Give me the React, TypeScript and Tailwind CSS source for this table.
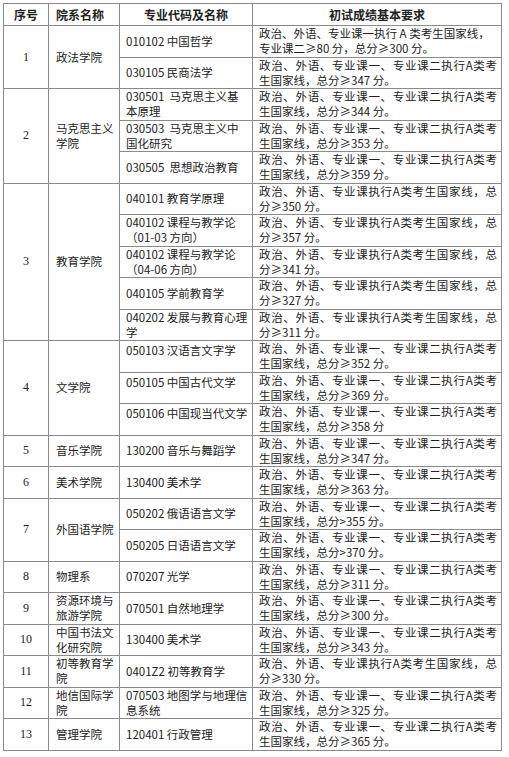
import React from 'react'

type Major = { name: string[]; req: string[]; loose?: boolean }
type Group = { no: string; dept: string[]; majors: Major[]; top?: boolean }

const B = '政治、外语、专业课一、专业课二执行A类考'
const C = '政治、外语、专业课执行A类考生国家线，总'

const groups: Group[] = [
  {
    no: '1',
    dept: ['政法学院'],
    majors: [
      { name: ['010102 中国哲学'], req: ['政治、外语、专业课一执行 A 类考生国家线，', '专业课二≥80 分，总分≥300 分。'], loose: true },
      { name: ['030105 民商法学'], req: [B, '生国家线，总分≥347 分。'] },
    ],
  },
  {
    no: '2',
    dept: ['马克思主义', '学院'],
    majors: [
      { name: ['030501  马克思主义基', '本原理'], req: [B, '生国家线，总分≥344 分。'] },
      { name: ['030503  马克思主义中', '国化研究'], req: [B, '生国家线，总分≥353 分。'] },
      { name: ['030505  思想政治教育'], req: [B, '生国家线，总分≥359 分。'] },
    ],
  },
  {
    no: '3',
    dept: ['教育学院'],
    majors: [
      { name: ['040101 教育学原理'], req: [C, '分≥350 分。'] },
      { name: ['040102 课程与教学论', '（01-03 方向）'], req: [C, '分≥357 分。'] },
      { name: ['040102 课程与教学论', '（04-06 方向）'], req: [C, '分≥341 分。'] },
      { name: ['040105 学前教育学'], req: [C, '分≥327 分。'] },
      { name: ['040202 发展与教育心理', '学'], req: [C, '分≥311 分。'] },
    ],
  },
  {
    no: '4',
    dept: ['文学院'],
    top: true,
    majors: [
      { name: ['050103 汉语言文字学'], req: [B, '生国家线，总分≥352 分。'] },
      { name: ['050105 中国古代文学'], req: [B, '生国家线，总分≥369 分。'] },
      { name: ['050106 中国现当代文学'], req: [B, '生国家线，总分≥358 分'] },
    ],
  },
  { no: '5', dept: ['音乐学院'], majors: [{ name: ['130200 音乐与舞蹈学'], req: [B, '生国家线，总分≥347 分。'] }] },
  { no: '6', dept: ['美术学院'], majors: [{ name: ['130400 美术学'], req: [B, '生国家线，总分≥363 分。'] }] },
  {
    no: '7',
    dept: ['外国语学院'],
    majors: [
      { name: ['050202 俄语语言文学'], req: [B, '生国家线，总分>355 分。'] },
      { name: ['050205 日语语言文学'], req: [B, '生国家线，总分>370 分。'] },
    ],
  },
  { no: '8', dept: ['物理系'], majors: [{ name: ['070207 光学'], req: [B, '生国家线，总分≥311 分。'] }] },
  { no: '9', dept: ['资源环境与', '旅游学院'], majors: [{ name: ['070501 自然地理学'], req: [B, '生国家线，总分≥300 分。'] }] },
  { no: '10', dept: ['中国书法文', '化研究院'], majors: [{ name: ['130400 美术学'], req: [B, '生国家线，总分≥343 分。'] }] },
  { no: '11', dept: ['初等教育学', '院'], majors: [{ name: ['0401Z2 初等教育学'], req: [C, '分≥330 分。'] }] },
  { no: '12', dept: ['地信国际学', '院'], majors: [{ name: ['070503 地图学与地理信', '息系统'], req: [B, '生国家线，总分≥325 分。'] }] },
  { no: '13', dept: ['管理学院'], majors: [{ name: ['120401 行政管理'], req: [B, '生国家线，总分≥365 分。'] }] },
]

const cell = 'border border-[#8a8a8a] p-0'

export default function App() {
  return (
    <div className="bg-white min-h-[757px] pl-[3px] pt-[3px] text-[#222] font-['Noto_Sans_CJK_SC',sans-serif] text-[11.5px] leading-[15px]">
      <table className="table-fixed border-collapse w-[498px] border border-[#6e6e6e]">
        <colgroup>
          <col className="w-[45px]" />
          <col className="w-[71px]" />
          <col className="w-[133px]" />
          <col className="w-[249px]" />
        </colgroup>
        <thead>
          <tr className="h-[22px] font-bold text-[12px]">
            <th className={`${cell} text-center`}>序号</th>
            <th className={`${cell} text-left pl-[7px]`}>院系名称</th>
            <th className={`${cell} text-center`}>专业代码及名称</th>
            <th className={`${cell} text-center font-semibold`}>初试成绩基本要求</th>
          </tr>
        </thead>
        <tbody>
          {groups.map(g =>
            g.majors.map((m, i) => (
              <tr key={g.no + '-' + i} className="h-[31.5px]">
                {i === 0 && (
                  <>
                    <td rowSpan={g.majors.length} className={`${cell} text-center font-['Liberation_Serif',serif] text-[12px]`}>
                      {g.no}
                    </td>
                    <td rowSpan={g.majors.length} className={`${cell} pl-[7px] pr-[2px]`}>
                      {g.dept.map((d, k) => <div key={k} className="whitespace-nowrap">{d}</div>)}
                    </td>
                  </>
                )}
                <td className={`${cell} pl-[6px] ${g.top ? 'align-top pt-[2px]' : ''}`}>
                  {m.name.map((n, k) => <div key={k} className="whitespace-pre">{n}</div>)}
                </td>
                <td className={`${cell} pl-[6px] pr-[4px]`}>
                  <div className={`whitespace-nowrap ${m.loose ? '' : '[text-align-last:justify]'}`}>{m.req[0]}</div>
                  <div className="whitespace-nowrap">{m.req[1]}</div>
                </td>
              </tr>
            ))
          )}
        </tbody>
      </table>
    </div>
  )
}
